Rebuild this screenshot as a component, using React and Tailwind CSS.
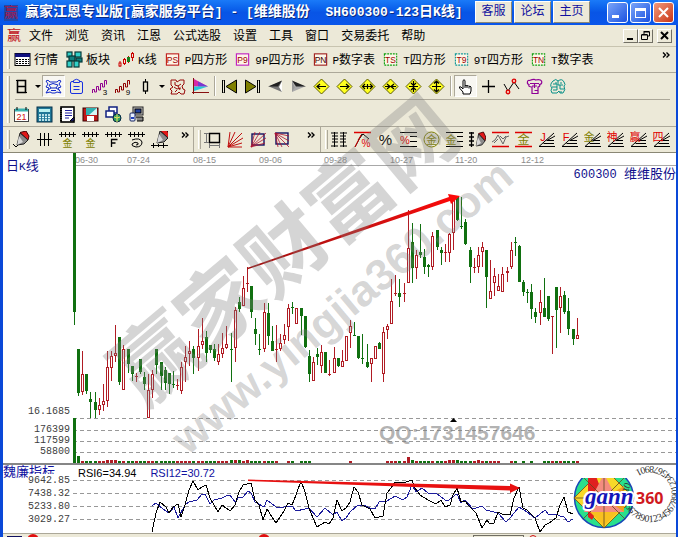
import React from "react";

// [direction, high, bodyTop, bodyBottom, low]
const CANDLES = [
  ["d", 153, 153, 312, 325], ["d", 349, 349, 393, 396], ["u", 351, 374, 392, 395], ["d", 374, 374, 391, 394],
  ["d", 392, 399, 402, 418], ["d", 392, 402, 410, 418], ["u", 398, 405, 410, 415], ["u", 384, 401, 405, 411],
  ["u", 351, 367, 401, 407], ["u", 351, 356, 368, 381], ["u", 325, 353, 356, 362], ["d", 337, 337, 382, 385],
  ["u", 345, 349, 390, 390], ["d", 349, 349, 364, 373], ["d", 366, 366, 374, 381], ["u", 373, 376, 377, 382],
  ["d", 359, 359, 372, 374], ["d", 372, 377, 384, 390], ["u", 374, 390, 418, 418], ["u", 370, 374, 390, 398],
  ["d", 349, 349, 365, 374], ["d", 362, 362, 376, 390], ["d", 367, 370, 383, 390], ["d", 373, 373, 384, 394],
  ["d", 371, 384, 385, 388], ["u", 379, 385, 386, 390], ["u", 362, 367, 391, 394], ["u", 346, 357, 362, 382],
  ["u", 341, 351, 354, 366], ["d", 346, 349, 358, 374], ["u", 329, 346, 358, 371], ["u", 318, 341, 345, 349],
  ["d", 331, 337, 353, 362], ["d", 345, 345, 350, 353], ["d", 344, 349, 358, 361], ["u", 344, 354, 362, 365],
  ["u", 333, 348, 354, 358], ["u", 326, 344, 348, 349], ["d", 333, 349, 350, 382], ["u", 307, 310, 348, 362],
  ["d", 297, 302, 309, 312], ["u", 276, 288, 306, 306], ["u", 267, 283, 284, 292], ["d", 286, 286, 312, 318],
  ["d", 318, 329, 334, 345], ["d", 334, 349, 350, 355], ["u", 303, 312, 349, 352], ["d", 303, 313, 336, 345],
  ["d", 326, 341, 351, 351], ["u", 325, 349, 350, 362], ["u", 334, 343, 349, 351], ["u", 324, 335, 340, 344],
  ["u", 304, 308, 327, 341], ["d", 302, 307, 308, 314], ["u", 308, 308, 324, 324], ["d", 308, 308, 316, 335],
  ["d", 316, 316, 347, 348], ["d", 350, 356, 374, 382], ["u", 357, 362, 381, 381], ["d", 348, 354, 357, 365],
  ["u", 345, 352, 366, 373], ["d", 352, 352, 373, 373], ["u", 360, 374, 375, 376], ["u", 347, 358, 373, 373],
  ["d", 358, 358, 366, 367], ["u", 350, 361, 367, 367], ["u", 336, 336, 361, 361], ["u", 320, 326, 333, 348],
  ["d", 322, 335, 336, 336], ["d", 336, 336, 358, 359], ["d", 334, 358, 359, 364], ["d", 344, 362, 367, 368],
  ["u", 358, 358, 364, 382], ["u", 346, 346, 359, 359], ["d", 342, 343, 349, 349], ["u", 327, 332, 374, 382],
  ["u", 324, 326, 330, 339], ["u", 279, 301, 324, 324], ["u", 275, 293, 294, 296], ["d", 279, 293, 297, 307],
  ["u", 283, 293, 294, 302], ["u", 210, 248, 283, 283], ["d", 223, 242, 268, 283], ["u", 250, 255, 268, 279],
  ["d", 224, 252, 255, 258], ["d", 249, 257, 267, 274], ["d", 264, 265, 267, 277], ["u", 232, 236, 267, 270],
  ["d", 230, 230, 247, 250], ["d", 247, 250, 253, 265], ["u", 244, 252, 253, 262], ["u", 233, 234, 253, 262],
  ["u", 198, 200, 233, 250], ["d", 196, 196, 220, 221], ["d", 197, 226, 227, 229], ["d", 219, 222, 244, 245],
  ["d", 247, 250, 267, 283], ["u", 258, 267, 268, 273], ["u", 247, 255, 267, 273], ["u", 242, 247, 252, 267],
  ["d", 250, 250, 277, 308], ["u", 260, 291, 299, 299], ["u", 268, 276, 283, 296], ["u", 274, 286, 291, 291],
  ["u", 267, 274, 292, 292], ["u", 267, 271, 273, 282], ["u", 242, 250, 267, 269], ["d", 237, 242, 243, 256],
  ["d", 245, 246, 282, 282], ["d", 280, 282, 292, 296], ["d", 289, 292, 293, 303], ["d", 284, 292, 309, 319],
  ["d", 308, 312, 317, 323], ["u", 290, 302, 313, 325], ["d", 278, 308, 317, 317], ["d", 296, 296, 319, 321],
  ["u", 316, 316, 317, 354], ["d", 287, 287, 310, 348], ["u", 287, 296, 308, 333], ["d", 291, 295, 312, 314],
  ["d", 298, 311, 329, 335], ["d", 329, 329, 339, 345], ["u", 318, 335, 339, 339],
];

const TALL_VOLUMES = { 0: 45, 1: 7, 8: 3, 9: 3, 10: 3, 38: 3, 39: 3, 40: 3, 42: 3, 81: 6, 82: 3, 91: 3, 92: 3, 93: 3, 98: 3 };
const QUIET_DAYS = [50, 51, 54, 58, 59, 60, 61, 62, 63, 64, 65, 66, 68, 69, 70, 71, 72, 73, 74, 75, 104, 105, 108, 110, 112, 113];

const DATES = [
  ["06-30", 75], ["07-24", 127], ["08-15", 193], ["09-06", 259], ["09-28", 324],
  ["10-27", 390], ["11-20", 455], ["12-12", 521],
];

const RSI6 =
  "152,532 156,513 160,502 166,507 169,513 173,507 178,504 181,517 185,505 189,490 193,481 198,490 202,487 206,485 210,498 218,512 222,505 226,508 230,511 235,505 239,492 243,485 251,483 255,500 259,505 263,520 267,509 272,517 276,523 284,511 288,503 292,505 296,495 301,481 305,492 309,508 313,518 317,527 325,522 329,524 333,518 337,500 342,511 346,508 350,502 354,487 358,492 362,505 370,509 375,518 383,516 387,493 391,488 395,482 403,483 412,480 415,488 420,495 428,500 436,504 441,500 445,507 450,505 453,495 457,488 461,502 465,501 469,506 476,513 482,528 487,520 490,524 494,523 498,512 502,514 510,515 514,498 519,487 523,508 527,510 535,518 540,532 545,525 549,523 556,518 560,505 564,497 568,512 573,514";
const RSI12 =
  "152,506 156,503 163,509 169,513 174,507 178,518 185,505 189,502 197,500 202,494 205,494 210,504 214,500 222,498 228,495 230,495 235,502 239,497 243,497 248,491 251,493 255,502 264,507 267,500 276,507 280,508 284,507 292,506 296,511 305,509 309,508 317,517 325,508 333,515 337,512 342,521 346,518 350,512 358,505 366,506 370,508 375,509 379,502 387,501 395,496 403,500 407,497 412,485 416,492 422,488 428,493 436,493 445,500 449,500 455,495 457,494 461,503 465,500 473,509 482,506 486,510 494,512 498,513 506,522 510,518 519,507 527,512 535,518 545,510 549,515 556,514 560,516 564,517 568,522 573,519";

const candleX = (i) => Math.round(74 + i * 4.12);

/* ---------- text helpers ---------- */

// Latin runs are set smaller so that they take half the width of a CJK character
function Mixed({ text, latin = "text-[11px]" }) {
  return text.split(/([\x20-\x7e]+)/).filter(Boolean).map((part, i) =>
    /^[\x20-\x7e]/.test(part)
      ? <span key={i} className={`whitespace-pre ${latin}`}>{part}</span>
      : <React.Fragment key={i}>{part}</React.Fragment>
  );
}

/* ---------- icons ---------- */

const S = ({ children, className = "w-[17px] h-[17px]" }) => (
  <svg viewBox="0 0 17 17" className={`block shrink-0 ${className}`} fill="none" stroke="#000" strokeWidth="1" aria-hidden="true">
    {children}
  </svg>
);

const Glyph = ({ x = 8.5, y = 13, size = 10, fill = "#808000", children }) => (
  <text x={x} y={y} fontSize={size} fill={fill} stroke="none" textAnchor="middle"
    fontFamily="'Liberation Sans','Noto Sans CJK SC',sans-serif">{children}</text>
);

const Diamond = ({ d }) => (
  <S>
    <path d="M8.500 1 16 8.500 8.500 16 1 8.500Z" fill="#ffff20" stroke="#5c5c00" />
    <path d={d} strokeWidth="1.200" />
  </S>
);

const Comb = ({ children }) => (
  <S>
    <path d="M0 3.500h17M2.500 1v5M6.500 1v5M10.500 1v5M14.500 1v5" />
    {children}
  </S>
);

const FanLines = ({ children, color = "#e00000" }) => (
  <S>
    <path d="M1 15.500 16 2M9 9.500 17 5M8.500 9.500H16M5.500 12.500H16M1 15.500h16" />
    <Glyph x={5} y={9.5} size={11} fill={color}>{children}</Glyph>
  </S>
);

const Boxed = ({ label, box, color = "#a00000", dash }) => (
  <S className="w-4 h-[17px]">
    <rect x="1.500" y="2.500" width="13" height="12" fill="#fdf6e8" stroke={box} strokeWidth="1.200" strokeDasharray={dash ? "2 1" : undefined} />
    <text x="8" y="12" fontSize="9" textAnchor="middle" fill={color} stroke="none" fontFamily="'Liberation Sans',sans-serif">{label}</text>
  </S>
);

const Brush = () => (
  <>
    <path d="M7 1.500 13 0l3 5-1 4Z" fill="#e01818" stroke="#400" />
    <path d="M7 2 15 9l-4 4-7 1Z" fill="#8a8a8a" stroke="#222" />
    <path d="M6 5 10 11 4 14Z" fill="#d8d8d8" stroke="none" />
  </>
);

const Wave = ({ color, n }) => (
  <S>
    <path d="M1.500 15v-3.500h2V14h2V8.500h2V12h2V5.500h2V9h2V2.500h2v4" stroke={color} />
    <Glyph x={14} y={16.5} size={8} fill="#000">{n}</Glyph>
  </S>
);

const ICONS = {
  quotes: (
    <S>
      <rect x="1" y="2.500" width="15" height="12" fill="#fff" />
      <path d="M1 3.500h15M1 5h15" stroke="#101080" strokeWidth="2" />
      <path d="M2 8.500h13M2 10.500h13M2 12.500h13" strokeDasharray="2 1" />
    </S>
  ),
  blocks: (
    <S>
      <g fill="#30d0c8" stroke="#053838" strokeWidth="1.200">
        <rect x="1" y="1" width="5" height="5" /><rect x="9" y="1" width="6" height="5" />
        <rect x="3" y="5" width="6" height="5" fill="#108080" /><rect x="10" y="7" width="6" height="4" fill="#108080" />
        <rect x="1" y="10" width="5" height="6" /><rect x="8" y="10" width="5" height="6" />
      </g>
    </S>
  ),
  kline: (
    <S>
      <path d="M2 10v6M6.500 7v7M10.500 5v7M14.500 1v9" stroke="#c00" />
      <g fill="#ece9d8" stroke="#c00"><rect x="1" y="12" width="2" height="3" /><rect x="5.500" y="8.500" width="2" height="4" /><rect x="13.500" y="2.500" width="2" height="4" /></g>
      <rect x="9.500" y="6.500" width="2" height="4" fill="#188018" stroke="#188018" />
    </S>
  ),
  day: <S><path d="M4.500 2.500h8v12h-8ZM4.500 8.500h8" strokeWidth="1.600" /><path d="M3 2.500h2M12 14.500h2" /></S>,
  web: (
    <S><path d="M1 3q2-2 4 1h7q2-3 4-1l-2 3 2 3-3 1 3 5-4-1-2 1H7l-2-1-4 1 3-5-3-1 2-3ZM4 7l4-1.500L13 7l-2 3H6ZM3 12l3-2M14 12l-3-2M6 12.500h5" stroke="#1028c8" /></S>
  ),
  clipboard: (
    <S><path d="M5 3.500H4Q2.500 3.500 2.500 5v9q0 1.500 1.500 1.500h9q1.500 0 1.500-1.500V5q0-1.500-1.500-1.500h-1M5.500 2.500q3-2.500 6 0v2h-6ZM5.500 8.500h6M5.500 11.500h6" stroke="#1830e0" /></S>
  ),
  wave3: <Wave color="#900090" n="3" />,
  wave9: <Wave color="#900000" n="9" />,
  candle: <S><path d="M8.500 1v15" /><rect x="6.500" y="4" width="4" height="9" fill="#ece9d8" strokeWidth="1.300" /></S>,
  map: (
    <S><path d="M2 2h5l1 2 3-2h4v4l-2 2 1 3 2 1-1 4h-3l-2-2-2 2H2l1-3-2-2 3-2-2-2ZM6 4v3l3 1 3-2M5 9l3 2 4-1M6 14l2-2M11 12l-2-4" stroke="#980808" /></S>
  ),
  flag: (
    <S>
      <path d="M2 1 16 8.500H2Z" fill="#d828a8" stroke="none" /><path d="M6 3.500 16 8.500H6Z" fill="#7838d0" stroke="none" />
      <path d="M2 8.500h14L2 13Z" fill="#28c8d8" stroke="none" /><path d="M1.500 0v16M0 14.500h17" stroke="#881010" />
    </S>
  ),
  first: <S><path d="M2.500 2v13" strokeWidth="3" /><path d="M2.500 2.500v12" stroke="#ece9d8" /><path d="M15.500 2v13L5 8.500Z" fill="#808000" /></S>,
  last: <S><path d="M14.500 2v13" strokeWidth="3" /><path d="M14.500 2.500v12" stroke="#ece9d8" /><path d="M1.500 2v13L12 8.500Z" fill="#808000" /></S>,
  prev: <S><path d="M15 2.500V14L11 11Z" fill="#fff" stroke="none" /><path d="M15 3 2 8.500 15 14l-3-5Z" fill="#777" stroke="none" /><path d="M15 2.500 1 8.500h10Z" fill="#222" stroke="none" /></S>,
  next: <S><path d="M2 2.500V14L6 11Z" fill="#999" stroke="none" /><path d="M2 3 15 8.500 2 14l3-5Z" fill="#aaa" stroke="none" /><path d="M2 2.500 16 8.500H6Z" fill="#222" stroke="none" /></S>,
  dLeft: <Diamond d="M4 8.500h9M7 6 4 8.500 7 11" />,
  dRight: <Diamond d="M4 8.500h9M10 6l3 2.500-3 2.500" />,
  dWide: <Diamond d="M3.500 8.500h10M6 6 3.500 8.500 6 11M11 6l2.500 2.500L11 11M8.500 6v5" />,
  dNarrow: <Diamond d="M3 8.500h11M5 6l3 2.500L5 11M12 6 9 8.500l3 2.500" />,
  dIn: <Diamond d="M8.500 3v11M4 8.500h9M6 5l2.500 2.500L11 5M6 12l2.500-2.500L11 12" />,
  dOut: <Diamond d="M8.500 3v11M4 8.500h9M6 5.500 8.500 3 11 5.500M6 11.500 8.500 14 11 11.500" />,
  hand: <S><path d="M6 16v-2L2.500 10q-.5-2 1.500-1l2 2V2.500q1-1.500 2 0V8q1-1.500 2 0 1-1.500 2 .5 1-1 2 .5V13l-1 3ZM8 8v2M10 8v2M12 8.500v2" fill="#fff" /></S>,
  plus: <S><path d="M8.500 2v13M2 8.500h13" strokeWidth="1.300" /></S>,
  nodes: <S><path d="M1 6l4 7 6-9 5 7" /><g stroke="#d00" fill="#f8c0b0" strokeWidth="1.300"><circle cx="5" cy="14" r="1.800" /><circle cx="11" cy="3" r="1.800" /></g></S>,
  tree: <S><path d="M1.500 4q0-2 2-1.500 5-2 6-.5 5-1 6 1 1 3-2 3.500 1 2-1.500 2.500v6.500h-6V9Q2 9 3 6.500 1 6 1.500 4ZM4 5.500h9M8.500 6v4M8.500 12.500h3M6 8h5" stroke="#900098" strokeWidth="1.200" /></S>,
  brain: <S><path d="M4 3q3-3 5 0 4-3 6 1 2 3 0 4 2 4-1 7h-3l-1-2-2 2H3q-2-3 0-5-3-3 1-7ZM4 6h4v3H3M9 3v4h5M11 7v4h4M8 9v3H4M7 4v2M12 4v2M12 13v2" stroke="#089088" /></S>,
  calendar: (
    <S><rect x="1.500" y="3.500" width="14" height="12" fill="#fff" stroke="#444" /><path d="M2 4h13" stroke="#38b0b0" strokeWidth="3" /><path d="M4 1v3M13 1v3" /><Glyph size={9} y={14} fill="#d01010">21</Glyph></S>
  ),
  calc: (
    <S><rect x="1" y="1" width="15" height="15" fill="#207898" stroke="#043048" /><path d="M3 4.500h11" stroke="#b8f0f0" strokeWidth="3" /><path d="M3 9h11M3 11.500h11M3 14h11" stroke="#e8ffff" strokeWidth="1.500" strokeDasharray="2 1" /></S>
  ),
  note: (
    <S><rect x="2" y="1" width="13" height="15" fill="#fff" strokeWidth="1.600" /><path d="M2 2v14" strokeWidth="2" strokeDasharray="1 1" /><path d="M6 4.500h7M6 7h7M6 9.500h7M6 12h4" stroke="#2020a0" /><path d="M11 15l4-4v4Z" fill="#2020a0" /></S>
  ),
  disk: (
    <S><rect x="1" y="2" width="15" height="13" fill="#c01818" stroke="#300" /><rect x="4" y="2" width="11" height="7" fill="#30b0b0" stroke="none" /><path d="M15 2v7H7Z" fill="#d8f4f4" stroke="none" /><rect x="5" y="10" width="7" height="5" fill="#fff" stroke="none" /></S>
  ),
  globe: (
    <S><rect x="4" y="1" width="8" height="6" fill="#fff" stroke="#102080" strokeWidth="1.500" /><rect x="1" y="5" width="8" height="6" fill="#fff" stroke="#102080" strokeWidth="1.500" /><circle cx="12" cy="12" r="4" fill="#30a060" stroke="#024" /><path d="M9 11q3 2 6 0M12 8v8" stroke="#e8e060" /></S>
  ),
  network: (
    <S><rect x="5" y="1" width="10" height="8" fill="#c8c8c8" stroke="#222" /><rect x="7" y="3" width="6" height="4" fill="#2040a0" /><rect x="2" y="7" width="5" height="8" rx="1" fill="#e8f0ff" stroke="#102060" /><path d="M8 11h7v4H9" fill="#888" /><path d="M3 12h3" stroke="#2040c0" strokeWidth="2" /></S>
  ),
  brush: <S><Brush /><path d="M0 13l3 3 2-2" /></S>,
  hash: <S><path d="M1 8.500h15M4.500 2v13M8.500 2v13M12.500 2v13" /></S>,
  combGold: <Comb><Glyph y={16}>金</Glyph></Comb>,
  combF: <Comb><path d="M6.500 16V8.500h6M6.500 12h4" strokeWidth="1.300" /></Comb>,
  combSpiral: <Comb><path d="M4 9q8-3 10 2 0 5-6 5-5-1-4-3 3-3 6-1 1 2-2 2" /></Comb>,
  brushLine: <S><g transform="translate(2 -2)"><Brush /></g><path d="M0 14.500h17M2.500 12v5M7.500 13v3M12.500 12v5" /></S>,
  frame: <S><path d="M5.500 2.500h10v9h-10Z" strokeWidth="1.400" /><path d="M2.500 2v10M0 2.500h5M0 11.500h5M5 14.500h11M5.500 12v5M15.500 12v5" stroke="#777" /></S>,
  fanRed: <S><path d="M1 16 3 1M1 16 8 1M1 16 15 2M1 16 16 7M1 16l14-4M1 16h14" stroke="#c01010" /></S>,
  fanBox: <S><rect x="2" y="3" width="12" height="11" stroke="#101060" strokeWidth="1.400" /><path d="M1 16 5 1M1 16 10 1M1 16 16 2M1 16 16 7M1 16l14-4" stroke="#b01030" strokeWidth=".8" /></S>,
  fanBoxDown: <S><rect x="3" y="2" width="12" height="11" stroke="#101060" strokeWidth="1.400" /><path d="M2 2l3 14M2 2l7 14M2 2l14 14M2 2l14 8M2 2l14 3" stroke="#b01030" strokeWidth=".8" /></S>,
  ruler: <S><path d="M3.500 1v15M12.500 1v15M0 2h7M1 5h6M1 8h6M1 11h6M0 15h7M9 2h7M9 5h6M9 8h6M9 11h6M9 15h7" /></S>,
  pctTop: <S><path d="M0 1.500h17" stroke="#d00" strokeWidth="1.500" /><path d="M1 16 8 3M4 9 9 3l6 5" /><path d="M1 16 7 4" stroke="#d00" /><Glyph x={12} y={16} size={10} fill="#d00">%</Glyph></S>,
  pct: <S><Glyph y={14} size={15} fill="#111">%</Glyph></S>,
  pctLines: <S><path d="M0 1.500h17M10 5.500h7M10 10.500h7M0 15.500h17" /><Glyph x={5} y={13} size={11} fill="#d00">%</Glyph></S>,
  goldCircle: <S><circle cx="8.500" cy="8.500" r="7.500" stroke="#808000" /><Glyph y={12.5} size={11}>金</Glyph></S>,
  goldLines: <S><path d="M0 1.500h17M11 5.500h6M11 10.500h6M0 15.500h17" /><Glyph x={5} y={13} size={11}>金</Glyph></S>,
  rulerBrush: <S><path d="M2.500 1v15M0 2h5M0 6h5M0 10h5M0 14h5" strokeWidth="1.300" /><g transform="translate(4 1) scale(.8 1)"><Brush /></g></S>,
  sine: <S><path d="M0 1.500h17M0 15.500h17" stroke="#d00" strokeWidth="1.400" /><path d="M0 11 3 9 6 4l5 9 3-7 3-1M2 12l4-4M8 5l3 3 3-3" stroke="#666" /></S>,
  goldRed: <S><path d="M0 1.500h17M0 15.500h17" stroke="#d00" strokeWidth="1.400" /><Glyph y={13} size={12}>金</Glyph></S>,
  fJ: <FanLines>J</FanLines>,
  fF: <FanLines>F</FanLines>,
  fGold: <FanLines color="#808000">金</FanLines>,
  fShen: <FanLines>神</FanLines>,
  fYing: <FanLines>赢</FanLines>,
  fSi: <FanLines>四</FanLines>,
};

/* ---------- toolbar parts ---------- */

const Grip = () => <span className="ml-1 my-[3px] w-[3px] shrink-0 self-stretch border-l border-white border-r border-r-[#aca899]" />;
const Divider = () => <span className="w-[2px] mx-[2px] my-[3px] shrink-0 self-stretch border-l border-l-[#aca899] border-r border-r-white" />;

function IconButton({ name, active }) {
  return (
    <button type="button" aria-label={name}
      className={`w-[23px] h-[22px] shrink-0 flex items-center justify-center ${active ? "bg-[#f8f7f2] border border-[#aca899] border-r-white border-b-white" : ""}`}>
      {ICONS[name]}
    </button>
  );
}

const Caret = () => (
  <button type="button" aria-label="more periods" className="w-[9px] h-[22px] shrink-0 flex items-center justify-center">
    <svg viewBox="0 0 6 3" className="w-[6px] h-[3px]" aria-hidden="true"><path d="M0 0h6L3 3Z" /></svg>
  </button>
);

const More = () => (
  <button type="button" aria-label="more" className="w-5 h-4 shrink-0 flex items-center justify-center">
    <svg viewBox="0 0 8 6" className="w-2 h-[6px]" fill="none" stroke="#000" strokeWidth="1.400" aria-hidden="true">
      <path d="M1 .5 3.500 3 1 5.500M4.500.5 7 3 4.500 5.500" />
    </svg>
  </button>
);

const icons = (names) => names.map((n, i) => <IconButton key={i} name={n} />);

const MENU = ["文件", "浏览", "资讯", "江恩", "公式选股", "设置", "工具", "窗口", "交易委托", "帮助"];

const VIEWS = [
  ["行情", ICONS.quotes], ["板块", ICONS.blocks], ["K线", ICONS.kline],
  ["P四方形", <Boxed label="PS" box="#c02020" />], ["9P四方形", <Boxed label="P9" box="#c020c0" />],
  ["P数字表", <Boxed label="PN" box="#a02020" color="#400000" />], ["T四方形", <Boxed label="TS" box="#10a010" dash />],
  ["9T四方形", <Boxed label="T9" box="#109898" dash />], ["T数字表", <Boxed label="TN" box="#10a010" dash />],
];

function TitleBar() {
  return (
    <header className="h-[25px] flex items-center pl-1 pr-1 bg-linear-to-b from-[#1a7af8] via-[#0855e6] to-[#0a56ea] text-white">
      <span className="w-[14px] mr-[7px] text-[14px] leading-4 text-[#a01850] bg-[#2048a8]">赢</span>
      <h1 className="flex-1 min-w-0 whitespace-nowrap text-[14px] leading-5 font-bold [text-shadow:1px_1px_0_#0a2a80]">
        <Mixed text="赢家江恩专业版[赢家服务平台] - [维维股份  SH600300-123日K线]" latin="text-[13px]" />
      </h1>
      <nav className="flex gap-[2px] shrink-0 self-start mt-[1px] mr-[17px]">
        {["客服", "论坛", "主页"].map((t) => (
          <button key={t} type="button"
            className="w-[37px] h-[22px] bg-[#ece9d8] border border-white border-r-[#8a8775] border-b-[#8a8775] text-[12px] leading-4 text-[#1010a0]">
            {t}
          </button>
        ))}
      </nav>
      <div className="flex gap-[2px] shrink-0">
        <button type="button" aria-label="minimize" className="w-[21px] h-[21px] rounded-[3px] border border-white bg-linear-to-br from-[#7ba4f8] to-[#1c50e0] flex items-end justify-start p-1">
          <span className="w-[7px] h-[3px] bg-white" />
        </button>
        <button type="button" aria-label="maximize" className="w-[21px] h-[21px] rounded-[3px] border border-white bg-linear-to-br from-[#7ba4f8] to-[#1c50e0] flex items-center justify-center">
          <span className="w-[11px] h-[10px] border border-t-[3px] border-white" />
        </button>
        <button type="button" aria-label="close" className="w-[21px] h-[21px] rounded-[3px] border border-white bg-linear-to-br from-[#f09878] to-[#c83010] flex items-center justify-center">
          <svg viewBox="0 0 11 11" className="w-[11px] h-[11px]" stroke="#fff" strokeWidth="2" aria-hidden="true"><path d="M1 1l9 9M10 1l-9 9" /></svg>
        </button>
      </div>
    </header>
  );
}

function MenuBar() {
  const mdi = "w-[15px] h-[14px] bg-[#ece9d8] border border-white border-r-[#716f64] border-b-[#716f64] flex items-center justify-center";
  return (
    <div className="h-[22px] flex items-center pl-1 pr-1 border-b border-[#c8c4b0]">
      <span className="w-[14px] mr-2 text-[14px] leading-4 text-[#c01020]">赢</span>
      <nav className="flex gap-3 pt-[2px]">
        {MENU.map((m) => <button key={m} type="button" className="text-[12px] leading-4 whitespace-nowrap">{m}</button>)}
      </nav>
      <div className="ml-auto flex">
        <button type="button" aria-label="minimize chart" className={mdi}>
          <svg viewBox="0 0 9 9" className="w-[9px] h-[9px]" aria-hidden="true"><path d="M1 7h6v2H1Z" /></svg>
        </button>
        <button type="button" aria-label="restore chart" className={mdi}>
          <svg viewBox="0 0 9 9" className="w-[9px] h-[9px]" fill="none" stroke="#000" aria-hidden="true"><path d="M3 3V1h5.500v4H6.500M2.500.5h6M.5 4h6v4.500h-6ZM.5 3.500h6" /></svg>
        </button>
        <button type="button" aria-label="close chart" className={`${mdi} ml-1`}>
          <svg viewBox="0 0 9 9" className="w-[9px] h-[9px]" stroke="#000" strokeWidth="2" aria-hidden="true"><path d="M1 1l7 7M8 1 1 8" /></svg>
        </button>
      </div>
    </div>
  );
}

function Toolbars() {
  return (
    <>
      <div className="h-[26px] flex items-center border-b border-[#aca899]">
        <Grip />
        <div className="ml-1 flex gap-2">
          {VIEWS.map(([label, icon]) => (
            <button key={label} type="button" className="flex items-center gap-1 text-[12px] leading-4 whitespace-nowrap">
              <span className="w-4">{icon}</span>
              <span className="pt-[2px]"><Mixed text={label} /></span>
            </button>
          ))}
        </div>
        <span className="ml-auto self-start"><More /></span>
      </div>

      <div className="h-[54px] flex border-b border-[#aca899]">
        <Grip />
        <div className="flex-1 min-w-0">
          <div className="h-[26px] flex items-center">
            <IconButton name="day" /><Caret />
            <IconButton name="web" active />
            {icons(["clipboard", "wave3", "wave9", "candle"])}
            <Caret />
            {icons(["map", "flag"])}
            <Divider />
            {icons(["first", "last", "prev", "next", "dLeft", "dRight", "dWide", "dNarrow", "dIn", "dOut"])}
            <Divider />
            <IconButton name="hand" active />
            {icons(["plus", "nodes", "tree", "brain"])}
          </div>
          <div className="h-[27px] ml-[5px] mr-[6px] flex items-center border-t border-[#aca899]">
            <div className="-ml-[5px] mt-[2px] flex">
              {icons(["calendar", "calc", "note", "disk", "globe", "network"])}
            </div>
          </div>
        </div>
      </div>

      <div className="h-[26px] flex items-stretch border-b border-[#8a8775] overflow-hidden">
        <div className="w-[190px] shrink-0 flex items-center">
          <Grip />
          {icons(["brush", "hash", "combGold", "combGold", "combF", "combSpiral", "brushLine"])}
          <span className="ml-1 self-start"><More /></span>
        </div>
        <div className="w-[127px] shrink-0 flex items-center border-l border-[#aca899]">
          <Grip />
          {icons(["frame", "fanRed", "fanBox", "fanBoxDown"])}
          <span className="ml-2 self-start"><More /></span>
        </div>
        <div className="flex-1 flex items-center border-l border-[#aca899]">
          <Grip />
          {icons(["ruler", "pctTop", "pct", "pctLines", "goldCircle", "goldLines", "rulerBrush", "sine", "goldRed", "fJ", "fF", "fGold", "fShen", "fYing", "fSi"])}
        </div>
      </div>
    </>
  );
}

/* ---------- charts ---------- */

const GridLine = ({ y, to = 676 }) => (
  <path d={`M73 ${y + 0.5}H${to}`} stroke="#989898" strokeDasharray="4 3" fill="none" />
);

function Candle({ data: [dir, high, top, bottom, low], x }) {
  const up = dir === "u";
  const color = up ? "#b01c24" : "#107010";
  return (
    <g>
      <path d={up ? `M${x + 0.5} ${high}V${top}M${x + 0.5} ${bottom}V${low}` : `M${x + 0.5} ${high}V${low}`} stroke={color} strokeWidth="1" />
      {up && bottom - top > 1
        ? <rect x={x - 0.5} y={top + 0.5} width="2" height={bottom - top - 1} fill="#fff" stroke={color} />
        : <rect x={x - 1} y={top} width="3" height={bottom - top} fill={color} />}
    </g>
  );
}

function PricePanel() {
  return (
    <section className="relative flex">
      <div className="w-[70px] shrink-0 flex flex-col justify-between pt-[6px] pl-[3px] pr-[3px]">
        <h2 className="text-[13px] leading-4 text-[#10108c]"><Mixed text="日K线" /></h2>
        <span className="self-end text-[10px] leading-3 text-[#404040]">16.1685</span>
      </div>
      <svg viewBox="73 153 603 265" className="block flex-1 min-w-0" role="img" aria-label="日K线">
        <path d="M74 165.500H676" stroke="#a8a8a8" />
        {DATES.map(([d, x]) => (
          <text key={d} x={x} y="163" fontSize="9" fill="#8c8c8c" fontFamily="'Liberation Sans',sans-serif">{d}</text>
        ))}
        <g shapeRendering="crispEdges">
          {CANDLES.map((c, i) => <Candle key={i} data={c} x={candleX(i)} />)}
        </g>
        <defs>
          <linearGradient id="trend"><stop offset="0" stopColor="#a01010" /><stop offset=".6" stopColor="#d01010" /><stop offset="1" stopColor="#ff0808" /></linearGradient>
        </defs>
        <path d="M247 268 449 197 448 194 460 196 451 204 450 201 247 269.500Z" fill="url(#trend)" />
      </svg>
      <p className="absolute right-0 top-[12px] text-[13px] leading-5 text-[#10108c]">
        <Mixed text="600300 维维股份" latin="text-[12px]" />
      </p>
    </section>
  );
}

function VolumePanel() {
  return (
    <section className="flex border-b-2 border-[#868686]">
      <div className="w-[70px] shrink-0 pt-[6px] pr-[3px] text-right text-[10px] leading-[11px] text-[#404040]">
        {["176399", "117599", "58800"].map((v) => <div key={v}>{v}</div>)}
      </div>
      <svg viewBox="73 418 603 45" className="block flex-1 min-w-0" role="img" aria-label="volume">
        {[418, 430, 441, 452].map((y) => <GridLine key={y} y={y} />)}
        <g shapeRendering="crispEdges">
          {CANDLES.map(([dir], i) => {
            if (QUIET_DAYS.includes(i)) return null;
            const h = TALL_VOLUMES[i] || 2;
            return <rect key={i} x={candleX(i) - 1} y={463 - h} width="3" height={h} fill={dir === "u" ? "#b01c24" : "#107010"} />;
          })}
        </g>
        <path d="M450 422 453.500 418 457 422Z" />
      </svg>
    </section>
  );
}

function Logo() {
  return (
    <svg viewBox="572 466 104 64" className="absolute right-0 top-[1px] w-[104px] h-16" role="img" aria-label="gann360">
      <defs>
        <clipPath id="cut"><rect x="572" y="478" width="66" height="52" /></clipPath>
        <path id="ring" d="M625 482A28 28 0 1 0 636 470" />
      </defs>
      <g clipPath="url(#cut)">
        <circle cx="604" cy="498" r="29.500" fill="#28e08c" stroke="#1848b8" strokeWidth="1.500" />
        <path d="M604 468 634 498 604 528 574 498Z" fill="#f8d828" stroke="#806020" />
        <path d="M588 476h8l8 22-12 22-4-3Z" fill="#e02020" />
        <path d="M604 474 584 512h40Z" fill="#f48c80" />
        <path d="M604 498 624 486v26Z" fill="#f0a020" />
        <path d="M604 512 590 512 604 526 618 512Z" fill="#f8c020" />
        <path d="M604 478v50M574 498h60M583 477l42 42M625 477l-42 42" stroke="#604820" strokeWidth=".8" />
      </g>
      <text fontSize="10" fill="#303030" fontFamily="'Liberation Serif',serif">
        <textPath href="#ring">012345678901234567890123456789012</textPath>
      </text>
      <text x="585" y="504" fontSize="23" fontWeight="bold" fontStyle="italic" fill="#1414b8" stroke="#fff" strokeWidth="4" strokeLinejoin="round" paintOrder="stroke" fontFamily="'Liberation Serif',serif">gann</text>
      <text x="636" y="504" fontSize="16" fontWeight="bold" fill="#d01820" stroke="#fff" strokeWidth="2" paintOrder="stroke" fontFamily="'Open Sans',sans-serif">360</text>
    </svg>
  );
}

function IndicatorPanel() {
  return (
    <section className="relative flex">
      <div className="w-[70px] shrink-0 pr-[3px] flex flex-col items-end text-[10px] leading-[13px] text-[#404040]">
        <h2 className="h-[9px] self-start text-[13px] leading-4 whitespace-nowrap text-[#1010a0]">魏廉指标</h2>
        {["9642.85", "7438.32", "5233.80", "3029.27"].map((v) => <span key={v} className="relative bg-white">{v}</span>)}
      </div>
      <div className="flex-1 min-w-0">
        <div className="h-[13px] pl-[5px] flex gap-[14px] font-['Liberation_Sans',sans-serif] text-[11px] leading-4">
          <span>RSI6=34.94</span>
          <span className="text-[#1010a0]">RSI12=30.72</span>
        </div>
        <svg viewBox="73 478 603 55" className="block w-full" role="img" aria-label="RSI">
          {[480, 493, 506, 519].map((y) => <GridLine key={y} y={y} to={573} />)}
          <g fill="none" shapeRendering="crispEdges">
            <polyline points={RSI12} stroke="#1c1c9c" />
            <polyline points={RSI6} stroke="#000" />
          </g>
          <path d="M248 479.500 510 486V483.500L520 488 510 493V490.500L248 481Z" fill="#e81010" />
        </svg>
      </div>
      <Logo />
    </section>
  );
}

function StatusBar() {
  return (
    <footer className="flex-1 min-h-1 h-1 overflow-hidden border-t border-[#aca899] bg-[#ece9d8] flex">
      <span className="mt-[2px] ml-1 w-[15px] h-3 bg-[#101060] shrink-0" />
      <span className="ml-[5px] w-3 h-3 rounded-full bg-[#e01010] shrink-0" />
      <span className="ml-[219px] w-3 h-3 rounded-full bg-[#e01010] shrink-0" />
      <span className="mt-[1px] ml-[203px] w-[51px] h-3 border border-[#716f64] shrink-0" />
      <span className="mt-[1px] ml-[5px] w-2 h-3 rounded-full border border-[#d01010] shrink-0" />
    </footer>
  );
}

function Watermark() {
  return (
    <div className="absolute inset-0 pointer-events-none overflow-hidden" aria-hidden="true">
      <div className="absolute left-[290px] top-[257px] w-0 h-0 flex items-center justify-center -rotate-[40deg]">
        <span className="whitespace-nowrap text-[84px] leading-none font-bold text-[#808080]/33">赢家财富网</span>
      </div>
      <div className="absolute left-[342px] top-[307px] w-0 h-0 flex items-center justify-center -rotate-[40deg]">
        <span className="whitespace-nowrap font-['Liberation_Sans',sans-serif] text-[44px] leading-none font-bold text-[#808080]/33">www.yingjia360.com</span>
      </div>
      <span className="absolute left-[379px] top-[421px] font-['Liberation_Sans',sans-serif] text-[21px] leading-6 font-bold text-[#808080]/60">QQ:1731457646</span>
    </div>
  );
}

export default function App() {
  return (
    <div className="relative min-h-screen flex flex-col overflow-hidden bg-[#0a48d8] text-black font-['Liberation_Mono','Noto_Sans_CJK_SC',monospace]">
      <TitleBar />
      <div className="flex-1 flex flex-col ml-[3px] mr-[2px] bg-[#ece9d8]">
        <MenuBar />
        <Toolbars />
        <main className="bg-white">
          <PricePanel />
          <VolumePanel />
          <IndicatorPanel />
        </main>
        <StatusBar />
      </div>
      <Watermark />
    </div>
  );
}
